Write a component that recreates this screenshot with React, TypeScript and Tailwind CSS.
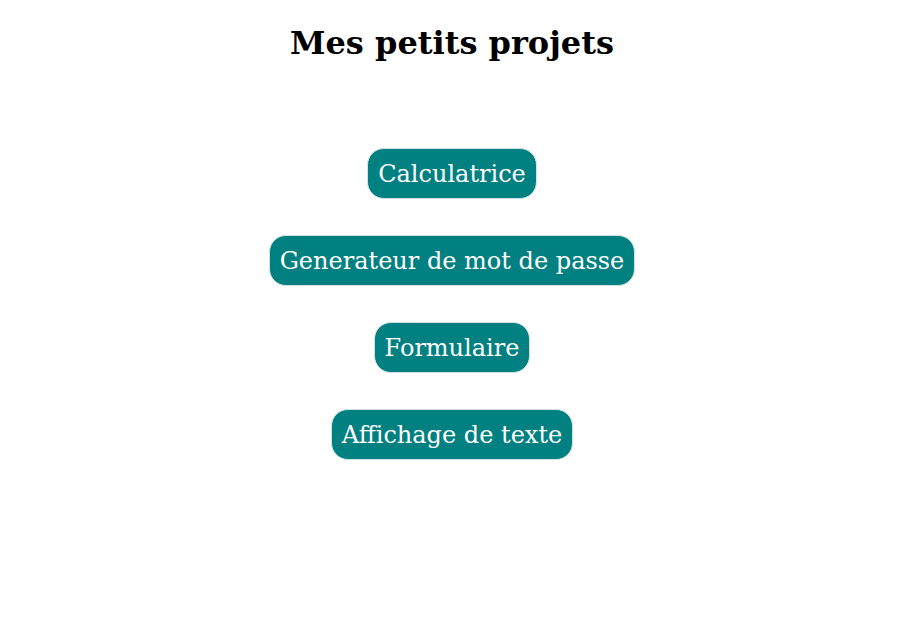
export default function App() {
  const projects = ['Calculatrice', 'Generateur de mot de passe', 'Formulaire', 'Affichage de texte'];

  return (
    <div className="min-h-[623px] bg-white pl-[4px] text-black" style={{ fontFamily: '"DejaVu Serif", serif' }}>
      <h1 className="pt-[25px] text-center text-[32px] font-bold leading-[37px]">Mes petits projets</h1>
      <div className="mt-[86px] flex flex-col items-center gap-[36px]">
        {projects.map((p) => (
          <button
            key={p}
            className="h-[51px] rounded-[17px] border border-[#cfe3e3] bg-[#008080] px-[10px] pt-[1px] text-[24px] text-white"
          >
            {p}
          </button>
        ))}
      </div>
    </div>
  );
}
